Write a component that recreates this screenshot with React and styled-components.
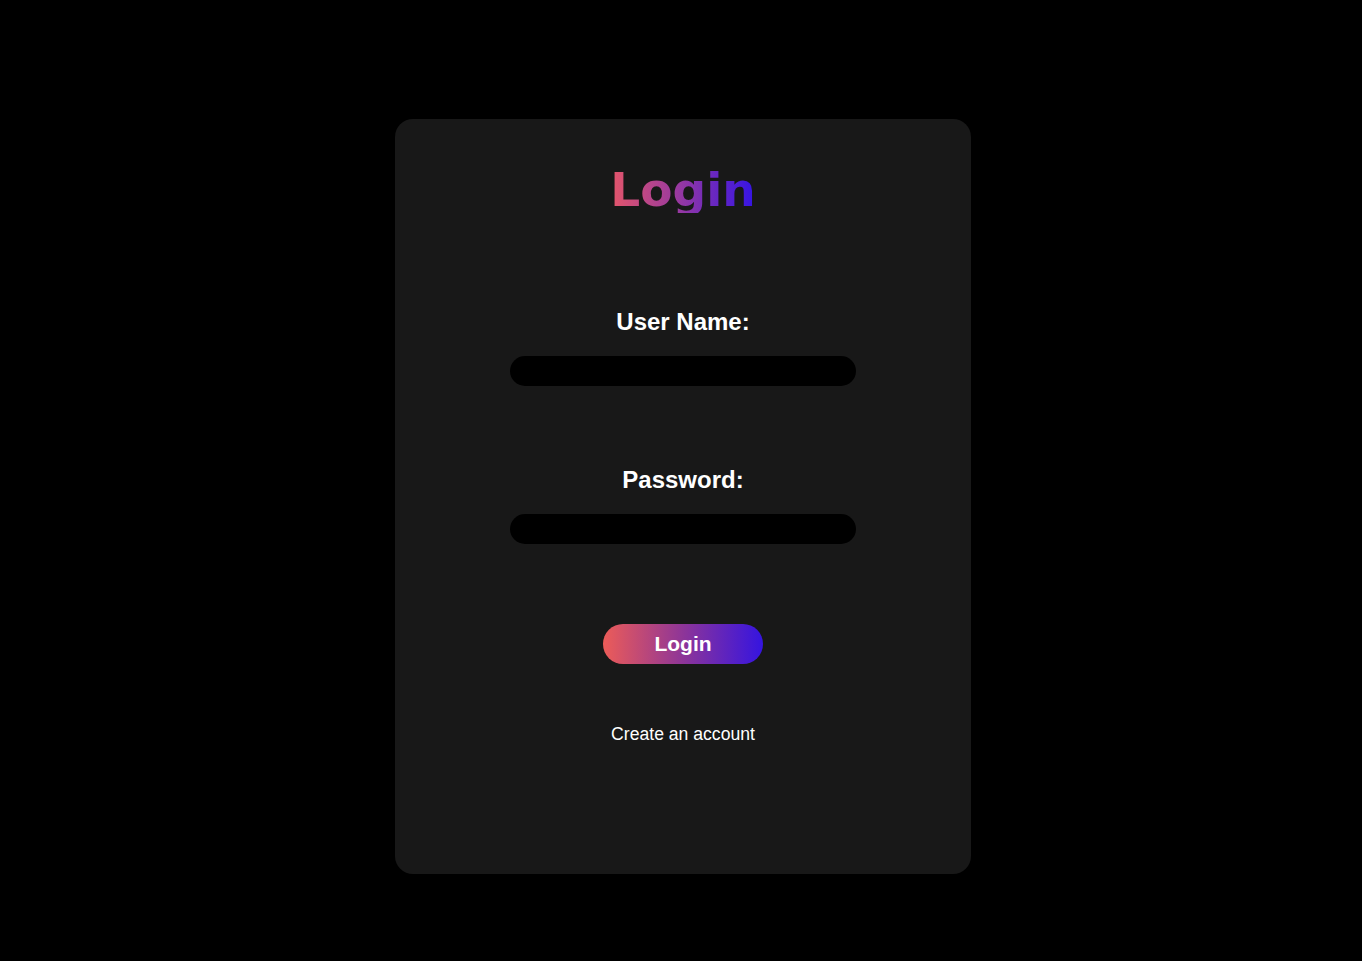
import styled, { createGlobalStyle } from "styled-components";

const GlobalStyle = createGlobalStyle`
  html, body {
    margin: 0;
    padding: 0;
    background: #000;
    font-family: "Liberation Sans", Arial, sans-serif;
  }
`

const Page = styled.div`
  min-height: 961px;
  display: flex;
  justify-content: center;
  align-items: flex-start;
  padding: 119px 0 0 4px;
  box-sizing: border-box;
`

const Card = styled.form`
  width: 576px;
  height: 755px;
  background: #181818;
  border-radius: 18px;
  display: flex;
  flex-direction: column;
  align-items: center;
  padding-top: 47px;
  box-sizing: border-box;
`

const Title = styled.h1`
  margin: 0;
  font-family: "DejaVu Sans", Verdana, sans-serif;
  font-weight: bold;
  font-size: 47px;
  line-height: 47px;
  background: linear-gradient(90deg, #e5566a, #9b3a9e 45%, #3313e6);
  -webkit-background-clip: text;
  background-clip: text;
  color: transparent;
`

const Field = styled.div`
  display: flex;
  flex-direction: column;
  align-items: center;
  margin-top: ${props => props.$top}px;
`

const Label = styled.label`
  color: #fff;
  font-weight: bold;
  font-size: 24px;
  line-height: 24px;
`

const Input = styled.input`
  margin-top: 22px;
  width: 346px;
  height: 30px;
  border: none;
  outline: none;
  border-radius: 15px;
  background: #000;
  color: #fff;
  padding: 0 14px;
  box-sizing: border-box;
  font-size: 16px;
`

const Button = styled.button`
  margin-top: 80px;
  width: 160px;
  height: 40px;
  border: none;
  border-radius: 20px;
  background: linear-gradient(90deg, #ec5c58, #8e3598 50%, #3514e0);
  color: #fff;
  font-family: "Liberation Sans", Arial, sans-serif;
  font-weight: bold;
  font-size: 21px;
  cursor: pointer;
`

const Link = styled.a`
  margin-top: 61px;
  color: #fff;
  font-size: 17.6px;
  line-height: 18px;
  text-decoration: none;
`

export default function App() {
  return (
    <>
      <GlobalStyle />
      <Page>
        <Card onSubmit={e => e.preventDefault()}>
          <Title>Login</Title>
          <Field $top={97}>
            <Label htmlFor="user">User Name:</Label>
            <Input id="user" type="text" />
          </Field>
          <Field $top={82}>
            <Label htmlFor="pass">Password:</Label>
            <Input id="pass" type="password" />
          </Field>
          <Button type="submit">Login</Button>
          <Link href="#">Create an account</Link>
        </Card>
      </Page>
    </>
  );
}
